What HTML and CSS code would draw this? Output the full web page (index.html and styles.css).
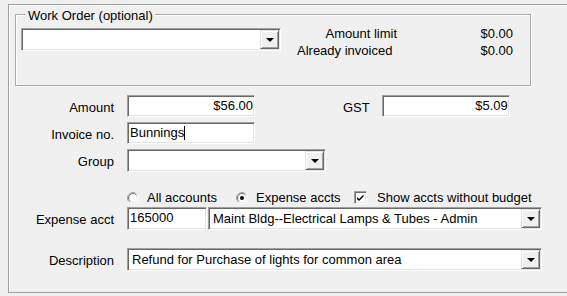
FILE: index.html
```html
<!DOCTYPE html>
<html>
<head>
<meta charset="utf-8">
<link rel="stylesheet" href="styles.css">
</head>
<body>
<div class="panel">
  <div class="group">
    <span class="legend">Work Order (optional)</span>
    <div class="combo wo"><span class="ctext"></span><span class="btn"><i class="arrow"></i></span></div>
    <div class="info">
      <span class="il right">Amount limit</span><span class="iv">$0.00</span>
      <span class="il">Already invoiced</span><span class="iv">$0.00</span>
    </div>
  </div>

  <div class="form">
    <div class="row r-amount">
      <span class="lbl">Amount</span>
      <div class="field num w128">$56.00</div>
      <span class="gst">GST</span>
      <div class="field num w128">$5.09</div>
    </div>
    <div class="row r-invoice">
      <span class="lbl">Invoice no.</span>
      <div class="field w128">Bunnings<span class="caret"></span></div>
    </div>
    <div class="row r-group">
      <span class="lbl">Group</span>
      <div class="combo grp"><span class="ctext"></span><span class="btn"><i class="arrow"></i></span></div>
    </div>
    <div class="row r-radio">
      <span class="lbl"></span>
      <span class="opt o1">
        <svg width="12" height="12" viewBox="0 0 12 12"><defs><linearGradient id="ga" x1="0" y1="0" x2="1" y2="1"><stop offset="0.35" stop-color="#a0a0a0"/><stop offset="0.65" stop-color="#ffffff"/></linearGradient><linearGradient id="gb" x1="0" y1="0" x2="1" y2="1"><stop offset="0.35" stop-color="#696969"/><stop offset="0.65" stop-color="#e3e3e3"/></linearGradient></defs><circle cx="6" cy="6" r="5.5" fill="#fff" stroke="url(#ga)"/><circle cx="6" cy="6" r="4.5" fill="#fff" stroke="url(#gb)"/></svg>
        All accounts
      </span>
      <span class="opt o2">
        <svg width="12" height="12" viewBox="0 0 12 12"><defs><linearGradient id="gc" x1="0" y1="0" x2="1" y2="1"><stop offset="0.35" stop-color="#a0a0a0"/><stop offset="0.65" stop-color="#ffffff"/></linearGradient><linearGradient id="gd" x1="0" y1="0" x2="1" y2="1"><stop offset="0.35" stop-color="#696969"/><stop offset="0.65" stop-color="#e3e3e3"/></linearGradient></defs><circle cx="6" cy="6" r="5.5" fill="#fff" stroke="url(#gc)"/><circle cx="6" cy="6" r="4.5" fill="#fff" stroke="url(#gd)"/><circle cx="6" cy="6" r="2" fill="#000"/></svg>
        Expense accts
      </span>
      <span class="opt o3">
        <span class="check"><svg width="9" height="9" viewBox="0 0 9 9"><path d="M1 4 L3 6 L7.5 1.5 L7.5 3.5 L3 8 L1 6 Z" fill="#000"/></svg></span>
        Show accts without budget
      </span>
    </div>
    <div class="row r-exp">
      <span class="lbl">Expense acct</span>
      <div class="field code">165000</div>
      <div class="combo acct"><span class="ctext">Maint Bldg--Electrical Lamps &amp; Tubes - Admin</span><span class="btn"><i class="arrow"></i></span></div>
    </div>
    <div class="row r-desc">
      <span class="lbl">Description</span>
      <div class="combo desc"><span class="ctext">Refund for Purchase of lights for common area</span><span class="btn"><i class="arrow"></i></span></div>
    </div>
  </div>
</div>
</body>
</html>
```

FILE: styles.css
```css
html, body {
  margin: 0;
  padding: 0;
}
body {
  background: #f0f0f0;
  font-family: "Liberation Sans", Arial, sans-serif;
  font-size: 13px;
  color: #000;
  overflow: hidden;
  width: 567px;
  height: 296px;
}
.panel {
  box-sizing: border-box;
  margin: 4px 0 0 8px;
  width: 559px;
  height: 289px;
  border: 1px solid #a0a0a0;
  border-right: none;
  box-shadow: inset 1px 1px 0 #fff;
}
.group {
  position: relative;
  box-sizing: border-box;
  margin: 9px 0 0 6px;
  width: 516px;
  height: 72px;
  border: 1px solid #a9a9a9;
  box-shadow: 1px 1px 0 #fff, inset 1px 1px 0 #fff;
  display: flex;
  align-items: flex-start;
  padding-left: 5px;
}
.legend {
  position: absolute;
  left: 10px;
  top: -7px;
  padding: 0 2px;
  line-height: 15px;
  background: #f0f0f0;
}
.combo {
  box-sizing: border-box;
  display: flex;
  height: 23px;
  background: #fff;
  border: 1px solid;
  border-color: #a0a0a0 #fff #fff #a0a0a0;
  box-shadow: inset 1px 1px 0 #696969, inset -1px -1px 0 #e3e3e3;
  padding: 1px;
}
.combo .ctext {
  flex: 1;
  padding-left: 3px;
  line-height: 20px;
  white-space: nowrap;
  overflow: hidden;
}
.combo .btn {
  box-sizing: border-box;
  width: 19px;
  height: 19px;
  background: #f0f0f0;
  border: 1px solid;
  border-color: #e3e3e3 #696969 #696969 #e3e3e3;
  box-shadow: inset 1px 1px 0 #fff, inset -1px -1px 0 #a0a0a0;
  display: flex;
  align-items: center;
  justify-content: center;
}
.arrow {
  display: block;
  width: 0;
  height: 0;
  border-left: 4px solid transparent;
  border-right: 4px solid transparent;
  border-top: 4px solid #000;
  margin-top: 1px;
}
.combo.wo {
  width: 260px;
  margin-top: 13px;
}
.info {
  margin: 10px 0 0 16px;
  display: grid;
  grid-template-columns: 100px 116px;
  line-height: 17px;
}
.il.right { justify-self: end; }
.iv { justify-self: end; }

.form {
  padding-top: 9px;
}
.row {
  display: flex;
  align-items: center;
}
.lbl {
  width: 105px;
  margin-right: 13px;
  padding-top: 2px;
  text-align: right;
  white-space: nowrap;
}
.field {
  box-sizing: border-box;
  height: 22px;
  background: #fff;
  border: 1px solid;
  border-color: #a0a0a0 #fff #fff #a0a0a0;
  box-shadow: inset 1px 1px 0 #696969, inset -1px -1px 0 #e3e3e3;
  padding: 0 1px 0 2px;
  line-height: 20px;
  white-space: nowrap;
}
.field.num { text-align: right; }
.w128 { width: 128px; }
.caret {
  display: inline-block;
  width: 1px;
  height: 14px;
  background: #000;
  vertical-align: -3px;
}
.gst {
  margin-left: 88px;
  margin-right: 12px;
  padding-top: 2px;
}
.r-invoice { margin-top: 5px; }
.r-group { margin-top: 5px; }
.combo.grp { width: 199px; }
.r-radio {
  margin-top: 18px;
  height: 15px;
}
.r-radio .lbl { padding-top: 0; }
.opt {
  display: flex;
  align-items: center;
  gap: 8px;
  white-space: nowrap;
}
.o1 { width: 109px; }
.o2 { width: 118px; }
.o3 { gap: 10px; }
.check {
  box-sizing: border-box;
  width: 13px;
  height: 13px;
  background: #fff;
  border: 1px solid;
  border-color: #a0a0a0 #fff #fff #a0a0a0;
  box-shadow: inset 1px 1px 0 #696969, inset -1px -1px 0 #e3e3e3;
  display: flex;
  align-items: center;
  justify-content: center;
}
.check svg { display: block; }
.r-exp { margin-top: 2px; }
.field.code {
  width: 80px;
  height: 23px;
  padding-left: 2px;
  margin-right: 1px;
}
.combo.acct { width: 334px; }
.r-desc { margin-top: 18px; }
.combo.desc { width: 415px; }
```
